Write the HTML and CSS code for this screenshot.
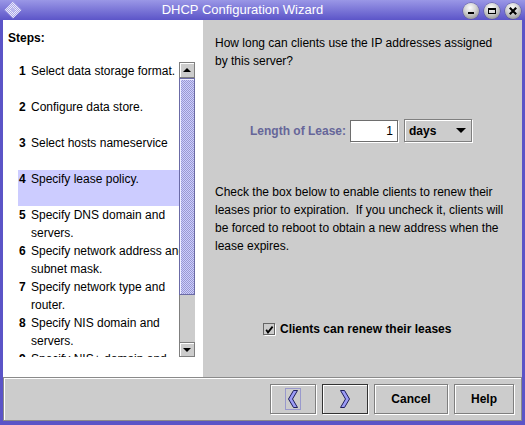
FILE: index.html
```html
<!DOCTYPE html>
<html>
<head>
<meta charset="utf-8">
<title>DHCP Configuration Wizard</title>
<link rel="stylesheet" href="styles.css">
</head>
<body>
<div class="window">
  <div class="titlebar">
    <div class="app-icon">
      <svg width="18" height="18" viewBox="0 0 18 18">
        <defs>
          <pattern id="chk" width="2" height="2" patternUnits="userSpaceOnUse">
            <rect width="2" height="2" fill="#ececfb"/>
            <rect width="1" height="1" fill="#aaa7e8"/>
            <rect x="1" y="1" width="1" height="1" fill="#aaa7e8"/>
          </pattern>
        </defs>
        <polygon points="9,0.5 17.5,9 9,17.5 0.5,9" fill="url(#chk)"/>
        <circle cx="9" cy="9" r="2" fill="#b9b7ec"/>
      </svg>
    </div>
    <div class="title">DHCP Configuration Wizard</div>
    <div class="wm-buttons">
      <span class="wm-btn"><svg width="16" height="16" viewBox="0 0 16 16"><rect x="5" y="9" width="6" height="2" fill="#000"/></svg></span>
      <span class="wm-btn"><svg width="16" height="16" viewBox="0 0 16 16"><rect x="4.5" y="5.5" width="7" height="5" fill="none" stroke="#000"/><rect x="4" y="5" width="8" height="2" fill="#000"/></svg></span>
      <span class="wm-btn"><svg width="16" height="16" viewBox="0 0 16 16"><path d="M4.8 4.8 L11.2 11.2 M11.2 4.8 L4.8 11.2" stroke="#000" stroke-width="2.2"/></svg></span>
    </div>
  </div>

  <div class="frame">
    <div class="content">
      <div class="steps-panel">
        <div class="steps-title">Steps:</div>
        <div class="steps-scroll">
          <div class="steps-viewport">
            <div class="step"><span class="num">1</span><span class="txt">Select data storage format.</span></div>
            <div class="step"><span class="num">2</span><span class="txt">Configure data store.</span></div>
            <div class="step"><span class="num">3</span><span class="txt">Select hosts nameservice</span></div>
            <div class="step current"><span class="num">4</span><span class="txt">Specify lease policy.</span></div>
            <div class="step"><span class="num">5</span><span class="txt">Specify DNS domain and servers.</span></div>
            <div class="step"><span class="num">6</span><span class="txt">Specify network address and subnet mask.</span></div>
            <div class="step"><span class="num">7</span><span class="txt">Specify network type and router.</span></div>
            <div class="step"><span class="num">8</span><span class="txt">Specify NIS domain and servers.</span></div>
            <div class="step"><span class="num">9</span><span class="txt">Specify NIS+ domain and servers.</span></div>
          </div>
          <div class="vscroll">
            <div class="sb-btn sb-up"></div>
            <div class="sb-thumb"></div>
            <div class="sb-track"></div>
            <div class="sb-btn sb-down"></div>
          </div>
        </div>
      </div>

      <div class="page">
        <p class="question">How long can clients use the IP addresses assigned<br>by this server?</p>
        <div class="lease-row">
          <span class="lease-label">Length of Lease:</span>
          <span class="lease-field">1</span>
          <span class="combo"><span class="combo-value">days</span><span class="combo-arrow"></span></span>
        </div>
        <p class="note">Check the box below to enable clients to renew their<br>leases prior to expiration.&nbsp; If you uncheck it, clients will<br>be forced to reboot to obtain a new address when the<br>lease expires.</p>
        <div class="renew">
          <svg class="checkbox" width="13" height="13" viewBox="0 0 13 13">
            <rect x="0.5" y="0.5" width="11" height="11" fill="#cccccc" stroke="#666666"/>
            <path d="M1.5 12.5 H12.5 V1.5" fill="none" stroke="#ffffff"/>
            <path d="M3.2 6.8 L5 9.4 L9.6 3.6" fill="none" stroke="#000" stroke-width="1.8"/>
          </svg>
          <span class="renew-label">Clients can renew their leases</span>
        </div>
      </div>
    </div>

    <div class="buttonbar">
      <button class="btn btn-back"><span class="focus"><svg width="12" height="20" viewBox="0 0 12 20"><polygon points="10.5,1.5 6.5,1.5 1.5,10 6.5,18.5 10.5,18.5 5.5,10" fill="#9b9bf5" stroke="#1e1e5a"/></svg></span></button>
      <button class="btn btn-next"><svg width="12" height="20" viewBox="0 0 12 20"><polygon points="1.5,1.5 5.5,1.5 10.5,10 5.5,18.5 1.5,18.5 6.5,10" fill="#9b9bf5" stroke="#1e1e5a"/></svg></button>
      <button class="btn btn-cancel">Cancel</button>
      <button class="btn btn-help">Help</button>
    </div>
  </div>
</div>
</body>
</html>
```

FILE: styles.css
```css
html, body {
  margin: 0;
  padding: 0;
}

body {
  width: 525px;
  height: 425px;
  overflow: hidden;
  font-family: "Liberation Sans", Arial, sans-serif;
  font-size: 12px;
  color: #000;
}

.window {
  width: 525px;
  height: 425px;
  background: #5b54c7;
  display: flex;
  flex-direction: column;
}

/* Title bar */
.titlebar {
  height: 20px;
  flex: none;
  display: flex;
  align-items: center;
  background: linear-gradient(#9a97e6, #5c55c8);
  color: #fff;
}

.app-icon {
  width: 24px;
  height: 20px;
  box-sizing: border-box;
  padding: 1px 0 0 4px;
  display: flex;
  align-items: flex-start;
}

.title {
  flex: 1;
  text-align: center;
  font-size: 13px;
  line-height: 20px;
  white-space: nowrap;
}

.wm-buttons {
  display: flex;
  gap: 5px;
  padding: 2px 4px 0 2px;
}

.wm-btn {
  width: 16px;
  height: 16px;
  border-radius: 50%;
  background: radial-gradient(circle at 45% 30%, #fbfbfb 0, #d4d4d4 40%, #9a9a9a 80%, #7d7d7d 100%);
  box-shadow: 0 0 0 0.5px #55558a;
  display: flex;
}

/* Frame */
.frame {
  flex: 1;
  display: flex;
  flex-direction: column;
  padding: 0 3px 4px;
}

.content {
  height: 357px;
  flex: none;
  display: flex;
}

/* Steps panel */
.steps-panel {
  width: 200px;
  flex: none;
  background: #fff;
  box-sizing: border-box;
  padding: 9px 0 0 5px;
}

.steps-title {
  font-weight: bold;
  line-height: 18px;
}

.steps-scroll {
  margin: 15px 0 0 10px;
  width: 177px;
  height: 295px;
  display: flex;
}

.steps-viewport {
  width: 161px;
  height: 295px;
  overflow: hidden;
}

.step {
  display: flex;
  width: 178px;
  min-height: 36px;
  line-height: 18px;
}

.step.current {
  background: #ccccff;
}

.num {
  width: 13px;
  flex: none;
  font-weight: bold;
  box-sizing: border-box;
  padding-left: 1px;
}

.txt {
  width: 165px;
  flex: none;
}

/* Scrollbar */
.vscroll {
  width: 16px;
  height: 295px;
  display: flex;
  flex-direction: column;
  background: #cccccc;
}

.sb-btn {
  flex: none;
  box-sizing: border-box;
  border: 1px solid #7f7f7f;
  box-shadow: inset 1px 1px 0 #ffffff;
  background: #cccccc;
  display: flex;
  align-items: center;
  justify-content: center;
}

.sb-up {
  height: 16px;
}

.sb-down {
  height: 15px;
}

.sb-up::after,
.sb-down::after {
  content: "";
  width: 0;
  height: 0;
  border-left: 4px solid transparent;
  border-right: 4px solid transparent;
}

.sb-up::after {
  border-bottom: 4px solid #000;
}

.sb-down::after {
  border-top: 4px solid #000;
}

.sb-thumb {
  height: 217px;
  flex: none;
  box-sizing: border-box;
  border: 1px solid #6b6ba6;
  box-shadow: inset 1px 1px 0 #eeeeff;
  background: repeating-conic-gradient(#9a9ad0 0 25%, #ccccff 0 50%) 0 0 / 2px 2px;
}

.sb-track {
  flex: 1;
  box-sizing: border-box;
  border-left: 1px solid #7f7f7f;
  background: #cccccc;
}

/* Right page */
.page {
  flex: 1;
  background: #cccccc;
  box-sizing: border-box;
  padding: 14px 0 0 12px;
  line-height: 18px;
}

.question {
  margin: 0;
}

.lease-row {
  display: flex;
  align-items: center;
  margin: 49px 0 0 35px;
  height: 23px;
}

.lease-label {
  font-weight: bold;
  color: #666699;
  margin-right: 4px;
  white-space: nowrap;
}

.lease-field {
  width: 48px;
  height: 22px;
  box-sizing: border-box;
  border: 1px solid #6e6e6e;
  box-shadow: 1px 1px 0 #ffffff;
  background: #fff;
  text-align: right;
  padding-right: 4px;
  line-height: 20px;
}

.combo {
  width: 68px;
  height: 23px;
  margin-left: 6px;
  box-sizing: border-box;
  border: 1px solid #7f7f7f;
  box-shadow: inset 1px 1px 0 #ffffff, 1px 1px 0 #ffffff;
  background: #cccccc;
  display: flex;
  align-items: center;
  justify-content: space-between;
  padding: 0 5px 0 4px;
}

.combo-value {
  font-weight: bold;
}

.combo-arrow {
  width: 0;
  height: 0;
  border-left: 5px solid transparent;
  border-right: 5px solid transparent;
  border-top: 5px solid #000;
}

.note {
  margin: 41px 0 0;
}

.renew {
  display: flex;
  align-items: center;
  gap: 4px;
  margin: 65px 0 0 48px;
  height: 18px;
}

.checkbox {
  flex: none;
}

.renew-label {
  font-weight: bold;
  white-space: nowrap;
}

/* Bottom button bar */
.buttonbar {
  height: 44px;
  flex: none;
  box-sizing: border-box;
  background: #cccccc;
  border: 1px solid #8a8a8a;
  box-shadow: inset 1px 1px 0 #ffffff;
  display: flex;
  justify-content: flex-end;
  align-items: center;
  gap: 6px;
  padding-right: 7px;
}

.btn {
  appearance: none;
  height: 30px;
  box-sizing: border-box;
  margin: 0;
  padding: 0;
  background: #cccccc;
  border: 1px solid #7f7f7f;
  box-shadow: inset 1px 1px 0 #ffffff, 1px 1px 0 #ffffff;
  font-family: "Liberation Sans", Arial, sans-serif;
  font-size: 12px;
  font-weight: bold;
  color: #000;
  display: flex;
  align-items: center;
  justify-content: center;
}

.btn-back {
  width: 46px;
}

.btn-next {
  width: 46px;
  border-color: #333333;
}

.btn-cancel {
  width: 74px;
}

.btn-help {
  width: 60px;
}

.focus {
  display: flex;
  border: 1px solid #9999cc;
  padding: 0 1px;
}
```
